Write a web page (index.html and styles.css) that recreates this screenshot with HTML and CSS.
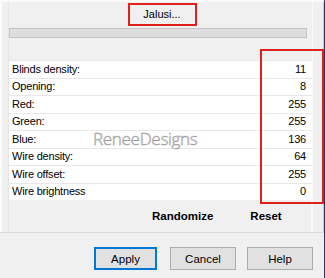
FILE: index.html
```html
<!DOCTYPE html>
<html>
<head>
<link rel="stylesheet" href="styles.css">
</head>
<body>

<div class="window">
  <div class="main">
    <div class="panel">
      <div class="gutter"></div>
      <div class="content">
        <div class="title-row">
          <div class="title-btn">Jalusi...</div>
        </div>
        <div class="bar"></div>
        <div class="rows">
          <div class="row"><span>Blinds density:</span><span>11</span></div>
          <div class="row"><span>Opening:</span><span>8</span></div>
          <div class="row"><span>Red:</span><span>255</span></div>
          <div class="row"><span>Green:</span><span>255</span></div>
          <div class="row"><span>Blue:</span><span>136</span></div>
          <div class="row"><span>Wire density:</span><span>64</span></div>
          <div class="row"><span>Wire offset:</span><span>255</span></div>
          <div class="row"><span>Wire brightness</span><span>0</span></div>
        </div>
        <div class="actions">
          <span class="act act-random">Randomize</span>
          <span class="act act-reset">Reset</span>
        </div>
      </div>
      <div class="scroll"></div>
    </div>
    <div class="footer">
      <button class="btn btn-default">Apply</button>
      <button class="btn">Cancel</button>
      <button class="btn">Help</button>
    </div>
  </div>
  <div class="edge"></div>

  <div class="watermark">ReneeDesigns</div>
  <div class="mark mark-values"></div>
</div>

</body>
</html>
```

FILE: styles.css
```css
*, *:before, *:after {
  box-sizing: border-box;
}

body {
  margin: 0;
  background: #f0f0f0;
  font: 11px/1 'Liberation Sans', Arial, sans-serif;
  color: #000;
}

.window {
  position: relative;
  width: 325px;
  height: 278px;
  display: flex;
  overflow: hidden;
}
.main {
  flex: 1;
  display: flex;
  flex-direction: column;
}
.edge {
  width: 2px;
  background: #1f3c66;
}

/* upper group */
.panel {
  height: 233px;
  display: flex;
  border-top: 2px solid #fafafa;
  border-bottom: 1px solid #dcdcdc;
}
.gutter {
  width: 9px;
  border-left: 2px solid #fbfbfb;
  border-right: 1px solid #e6e6e6;
}
.content {
  width: 303px;
  display: flex;
  flex-direction: column;
}
.scroll {
  flex: 1;
  border-left: 1px solid #fafafa;
  border-right: 1px solid #c9c9c9;
  background: #f0f0f0;
}

.title-row {
  display: flex;
  justify-content: center;
  padding: 1px 0 0 3px;
}
.title-btn {
  width: 69px;
  height: 23px;
  border: 2px solid #e0201c;
  display: flex;
  align-items: center;
  justify-content: center;
  font-size: 11px;
}
.bar {
  margin: 2px 5px 0 0;
  height: 10px;
  background: #dedede;
  border: 1px solid #c4c4c4;
}

.rows {
  margin-top: 22px;
}
.row {
  height: 17.5px;
  background: #fff;
  border-top: 1px solid #e8e8e8;
  display: flex;
  align-items: center;
  justify-content: space-between;
  padding: 0 6px 0 3px;
  letter-spacing: -0.2px;
}

.actions {
  flex: 1;
  display: flex;
  align-items: center;
  padding-top: 2px;
  font-weight: bold;
  font-size: 11.5px;
  border-right: 1px solid #fafafa;
}
.act-random {
  margin-left: 143px;
}
.act-reset {
  margin-left: 37px;
}

/* dialog buttons */
.footer {
  flex: 1;
  display: flex;
  align-items: flex-start;
  padding: 14px 0 0 94px;
}
.btn {
  height: 23px;
  width: 66px;
  margin-right: 11px;
  background: #e1e1e1;
  border: 1px solid #adadad;
  font: 11.5px 'Liberation Sans', Arial, sans-serif;
  color: #000;
  padding: 0;
}
.btn-default {
  width: 63px;
  margin-right: 13px;
  border: 2px solid #0078d7;
}

/* overlays */
.watermark {
  position: absolute;
  left: 93px;
  top: 127px;
  font: 300 17px 'Open Sans', sans-serif;
  color: #e6e6e6;
  -webkit-text-stroke: 0.5px #9a9a9a;
  letter-spacing: -0.3px;
}
.mark-values {
  position: absolute;
  left: 260px;
  top: 49px;
  width: 64px;
  height: 155px;
  border: 2px solid #e0201c;
}
```
